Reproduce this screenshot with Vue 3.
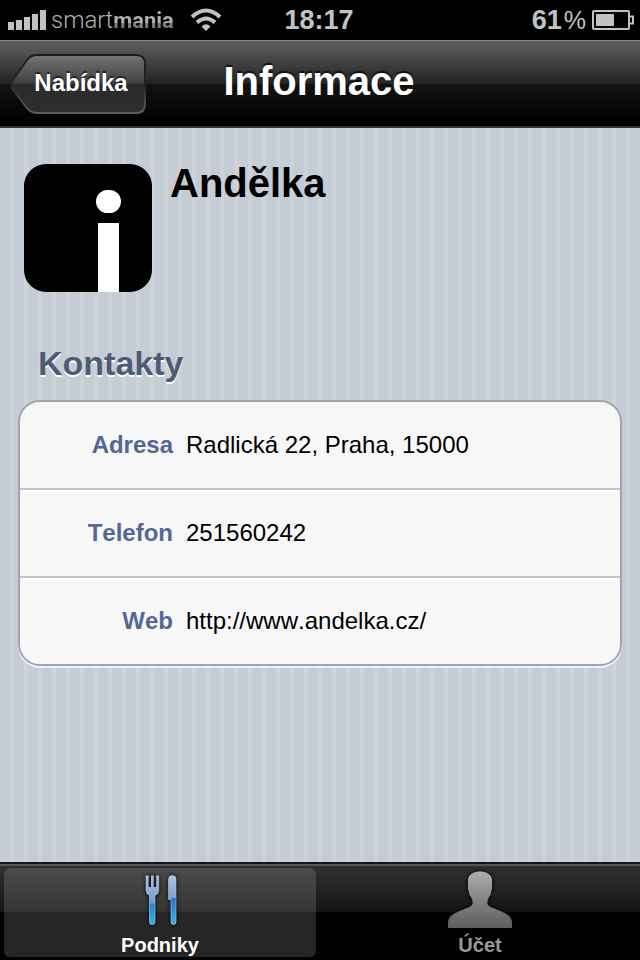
<script setup>
import { ref } from 'vue'

const contacts = [
  { label: 'Adresa', value: 'Radlická 22, Praha, 15000' },
  { label: 'Telefon', value: '251560242' },
  { label: 'Web', value: 'http://www.andelka.cz/', href: 'http://www.andelka.cz/' },
]
const activeTab = ref('podniky')
</script>

<template>
  <div class="screen">
    <div class="status">
      <div class="status-left">
        <svg class="signal" viewBox="0 0 38 20" aria-hidden="true">
          <path d="M0 12h6v8H0zM8 10h6v10H8zM16 7h6v13h-6zM24 4h6v16h-6zM32 0h6v20h-6z" />
        </svg>
        <span class="carrier">smart<b>mania</b></span>
        <svg class="wifi" viewBox="0 0 32 24" aria-hidden="true">
          <path d="M2 9Q16 -4 30 9" />
          <path d="M7 14.500Q16 6.500 25 14.500" />
          <path class="dot" d="M11.500 18.500Q16 14 20.500 18.500L16 23z" />
        </svg>
      </div>
      <time class="clock">18:17</time>
      <div class="status-right">
        <span class="percent">61 <span class="sign">%</span></span>
        <svg class="battery" viewBox="0 0 42 20" aria-hidden="true">
          <rect class="case" x="1" y="1" width="36" height="18" rx="1" />
          <path class="case" d="M38 6.500h3v7h-3" />
          <rect x="4" y="4" width="18" height="12" />
        </svg>
      </div>
    </div>

    <header class="navbar">
      <button class="back" type="button">
        <svg class="back-shape" viewBox="0 0 136 60" aria-hidden="true">
          <defs>
            <linearGradient id="backFill" x1="0" y1="0" x2="0" y2="1">
              <stop offset="0" stop-color="#777" />
              <stop offset="0.12" stop-color="#686868" />
              <stop offset="0.49" stop-color="#3f3f3f" />
              <stop offset="0.5" stop-color="#2b2b2b" />
              <stop offset="1" stop-color="#2d2d2d" />
            </linearGradient>
            <linearGradient id="backEdge" x1="0" y1="0" x2="0" y2="1">
              <stop offset="0" stop-color="#1d1d1d" />
              <stop offset="0.5" stop-color="#222" />
              <stop offset="1" stop-color="#606060" />
            </linearGradient>
          </defs>
          <path
            d="M27 1H126Q135 1 135 10V50Q135 59 126 59H27Q21 59 17 54L3 36Q-1 31 3 26L17 6Q21 1 27 1Z"
            fill="url(#backFill)" stroke="url(#backEdge)" stroke-width="2"
          />
        </svg>
        <span class="back-label">Nabídka</span>
      </button>
      <h1 class="title">Informace</h1>
    </header>

    <main class="content">
      <section class="place">
        <svg class="logo" viewBox="0 0 128 128" aria-hidden="true">
          <rect width="128" height="128" rx="22" />
          <rect class="ink" x="72" y="26" width="25" height="23" rx="11.500" />
          <path class="ink" d="M74 59h21v69H74z" />
        </svg>
        <h2 class="name">Andělka</h2>
      </section>

      <h3 class="group-title">Kontakty</h3>
      <dl class="group">
        <div v-for="item in contacts" :key="item.label" class="row">
          <dt>{{ item.label }}</dt>
          <dd>
            <a v-if="item.href" :href="item.href">{{ item.value }}</a>
            <template v-else>{{ item.value }}</template>
          </dd>
        </div>
      </dl>
    </main>

    <nav class="tabs">
      <button type="button" class="tab" :class="{ active: activeTab === 'podniky' }" @click="activeTab = 'podniky'">
        <svg class="tab-icon" viewBox="0 0 64 58" aria-hidden="true">
          <defs>
            <linearGradient id="steel" gradientUnits="userSpaceOnUse" x1="0" y1="5" x2="0" y2="34">
              <stop offset="0" stop-color="#b5c3da" />
              <stop offset="1" stop-color="#6f98cf" />
            </linearGradient>
            <linearGradient id="handle" gradientUnits="userSpaceOnUse" x1="0" y1="28" x2="0" y2="54">
              <stop offset="0" stop-color="#1f72d0" />
              <stop offset="1" stop-color="#31b3d9" />
            </linearGradient>
          </defs>
          <path
            d="M18 5.500V20Q18 24 21.500 25.500V52Q21.500 54.500 24.200 54.500T27 52V25.500Q30.700 24 30.700 20V5.500H28.200V17H25.700V5.500H23V17H20.600V5.500Z"
            fill="url(#steel)"
          />
          <path d="M21.500 34.500L27 33V52Q27 54.500 24.200 54.500T21.500 52Z" fill="url(#handle)" />
          <path d="M40.500 29.500V9Q40.500 5.500 44.300 5.500T48 9V52Q48 54.500 45.500 54.500T43 52V29.500Z" fill="url(#steel)" />
          <path d="M40.500 29.500L48 27.500V52Q48 54.500 45.500 54.500T43 52V29.500Z" fill="url(#handle)" />
          <path
            d="M18 5.500V20Q18 24 21.500 25.500V52Q21.500 54.500 24.200 54.500T27 52V25.500Q30.700 24 30.700 20V5.500M40.500 29.500V9Q40.500 5.500 44.300 5.500T48 9V52Q48 54.500 45.500 54.500T43 52V29.500Z"
            fill="none" stroke="#9fd0ee" stroke-opacity="0.6"
          />
        </svg>
        <span>Podniky</span>
      </button>
      <button type="button" class="tab" :class="{ active: activeTab === 'ucet' }" @click="activeTab = 'ucet'">
        <svg class="tab-icon" viewBox="0 0 64 58" aria-hidden="true">
          <defs>
            <linearGradient id="person" x1="0" y1="0" x2="0" y2="1">
              <stop offset="0" stop-color="#adadad" />
              <stop offset="1" stop-color="#5c5c5c" />
            </linearGradient>
          </defs>
          <path
            d="M32 1.500C38 1.500 43 4 44 9V15.500Q44.500 18 43.500 20.500Q43 25 40.700 27.500Q39.500 30 39.300 33C39.500 36.500 44 37.500 48 39.200Q56 42 60.500 45.500Q64 48.500 64 53V58H0V53Q0 48.500 3.500 45.500Q8 42 16 39.200C20 37.500 24.500 36.500 24.700 33Q24.500 30 23.300 27.500Q21 25 20.500 20.500Q19.500 18 20 15.500V9C21 4 26 1.500 32 1.500Z"
            fill="url(#person)"
          />
        </svg>
        <span>Účet</span>
      </button>
    </nav>
  </div>
</template>

<style>
body {
  margin: 0;
  background: #000;
}
</style>

<style scoped>
.screen {
  display: flex;
  flex-direction: column;
  min-height: 100vh;
  font-family: "Liberation Sans", Arial, sans-serif;
  font-kerning: none;
  color: #000;
}

.status {
  display: grid;
  grid-template-columns: 1fr auto 1fr;
  align-items: center;
  height: 40px;
  padding: 0 6px 0 8px;
  background: #000;
  color: #c2c2c2;
  fill: #c2c2c2;
}
.status-left,
.status-right {
  display: flex;
  align-items: center;
}
.status-right {
  justify-content: flex-end;
  gap: 6px;
}
.signal {
  width: 38px;
  height: 20px;
}
.carrier {
  margin-left: 5px;
  font-family: Roboto, sans-serif;
  font-size: 24px;
  font-weight: 300;
  line-height: 28px;
  color: #b0b0b0;
}
.carrier b {
  font-size: 22px;
  font-weight: 700;
  color: transparent;
  background: linear-gradient(#b0b0b0 62%, #7a7a7a 62%);
  background-clip: text;
}
.wifi {
  width: 32px;
  height: 24px;
  margin-left: 16px;
  fill: none;
  stroke: #c2c2c2;
  stroke-width: 4;
}
.wifi .dot {
  fill: #c2c2c2;
  stroke: none;
}
.clock,
.percent {
  font-size: 27px;
  font-weight: 700;
  line-height: 28px;
}
.clock {
  padding-right: 4px;
}
.percent {
  display: flex;
  align-items: baseline;
  gap: 2px;
}
.sign {
  font-size: 25px;
  font-weight: 400;
}
.battery {
  width: 42px;
  height: 20px;
}
.battery .case {
  fill: none;
  stroke: #c2c2c2;
  stroke-width: 2;
}

.navbar {
  display: grid;
  grid-template-columns: 1fr auto 1fr;
  align-items: center;
  box-sizing: border-box;
  height: 88px;
  padding: 0 10px;
  border-top: 1px solid #858585;
  border-bottom: 2px solid #333;
  background: linear-gradient(#606060 0, #222 43px, #121212 43px, #000 84px);
}
.back {
  display: grid;
  justify-self: start;
  align-items: center;
  padding: 0;
  border: 0;
  background: none;
  font: inherit;
  color: #fff;
  cursor: pointer;
}
.back-shape,
.back-label {
  grid-area: 1 / 1;
}
.back-shape {
  width: 136px;
  height: 60px;
}
.back-label {
  padding: 0 18px 2px 24px;
  font-size: 24px;
  font-weight: 700;
  line-height: 28px;
  text-shadow: 0 -2px 1px #222;
}
.title {
  margin: 0;
  padding: 0 2px 6px 0;
  font-size: 40px;
  font-weight: 700;
  line-height: 48px;
  color: #fff;
  text-shadow: 0 -2px 1px #111;
}

.content {
  flex: 1;
  padding: 36px 18px;
  background: repeating-linear-gradient(90deg, #c5ccd4 0 10px, #cbd2d8 10px 14px);
}
.place {
  display: flex;
  gap: 18px;
  padding-left: 6px;
}
.logo {
  flex: none;
  width: 128px;
  height: 128px;
}
.logo .ink {
  fill: #fff;
}
.name {
  margin: 0;
  font-size: 40px;
  line-height: 38px;
}
.group-title {
  margin: 48px 0 14px;
  padding-left: 20px;
  font-size: 34px;
  line-height: 46px;
  color: #4f5b75;
  text-shadow: 0 2px 0 #fff;
}
.group {
  margin: 0;
  overflow: hidden;
  border: 2px solid #a0a5ad;
  border-radius: 22px;
  background: #f7f7f7;
  box-shadow: 0 2px 0 #f1f4f6;
}
.row {
  display: grid;
  grid-template-columns: 153px 1fr;
  gap: 13px;
  align-items: center;
  height: 86px;
  font-size: 24px;
  line-height: 28px;
}
.row + .row {
  border-top: 2px solid #c4c5c7;
  box-shadow: inset 0 2px 0 #fff;
}
dt {
  font-weight: 700;
  text-align: right;
  color: #536796;
}
dd {
  margin: 0;
}
dd a {
  color: inherit;
  text-decoration: none;
}

.tabs {
  display: grid;
  grid-template-columns: 1fr 1fr;
  box-sizing: border-box;
  height: 98px;
  border-top: 2px solid #15171c;
  background: linear-gradient(#555 0 2px, #303030 2px, #151515 48px, #000 48px);
}
.tab {
  display: flex;
  flex-direction: column;
  align-items: center;
  gap: 5px;
  margin: 4px;
  padding: 2px 0 0;
  border: 0;
  border-radius: 6px;
  background: none;
  font: 700 20px/24px "Liberation Sans", Arial, sans-serif;
  color: #999;
  cursor: pointer;
}
.tab.active {
  background: linear-gradient(#4b4b4b 0, #353535 44px, #262626 44px);
  color: #fff;
}
.tab-icon {
  flex: none;
  width: 64px;
  height: 58px;
  filter: drop-shadow(0 0 2px #000);
}
</style>
